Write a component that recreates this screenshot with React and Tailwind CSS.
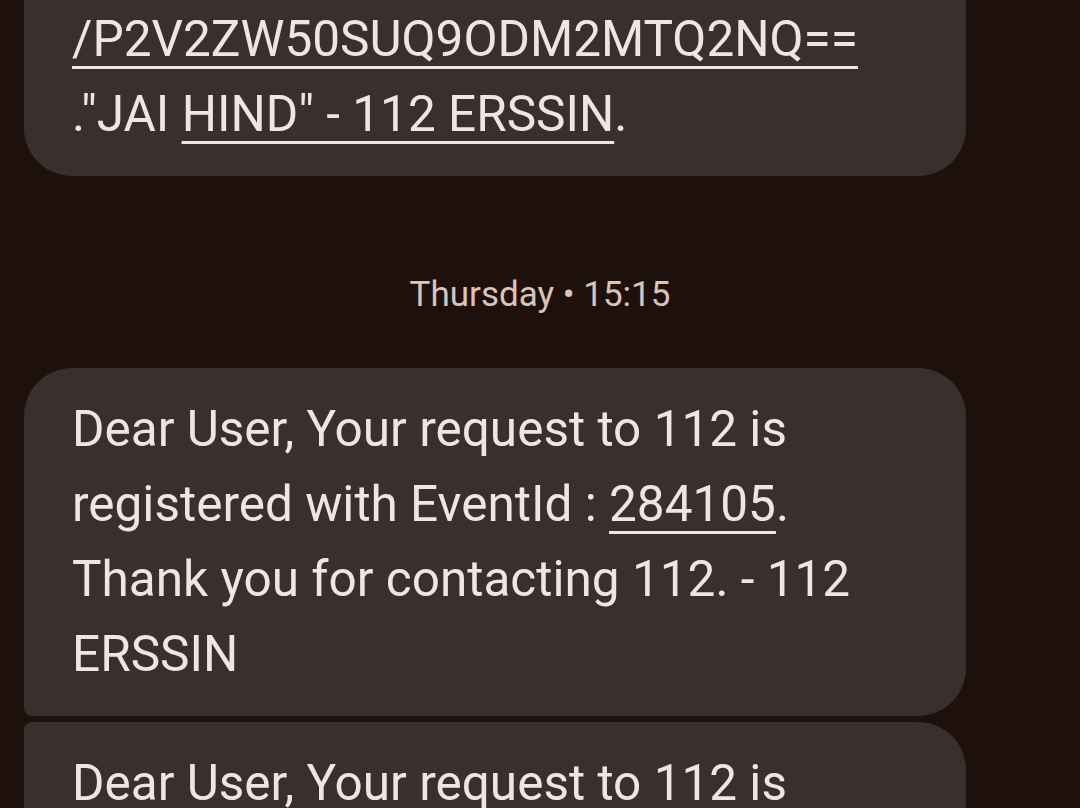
const link = 'underline decoration-[3px] underline-offset-[10px]';

const Bubble = ({ className = '', children }) => (
  <div
    className={`w-[942px] bg-[#38302e] pl-12 pr-[80px] text-[49.5px] leading-[75px] text-[#f2e4e0] ${className}`}
  >
    {children}
  </div>
);

export default function App() {
  return (
    <div
      className="h-[808px] overflow-hidden bg-[#1e110b] px-6"
      style={{ fontFamily: 'Roboto, "Noto Sans", sans-serif' }}
    >
      {/* previous message, cut off by the top of the screen */}
      <Bubble className="pt-[2px] pb-6 rounded-b-[48px]">
        <p>
          <span className={link}>/P2V2ZW50SUQ9ODM2MTQ2NQ==</span>
          <br />
          ."JAI <span className={link}>HIND" - 112 ERSSIN</span>.
        </p>
      </Bubble>

      {/* date divider */}
      <div className="mt-[99px] mb-[53px] text-center text-[35px] leading-[40px] text-[#d8c4bd]">
        Thursday • 15:15
      </div>

      {/* message group */}
      <div className="flex flex-col gap-[6px]">
        <Bubble className="py-6 rounded-t-[48px] rounded-br-[48px] rounded-bl-[8px]">
          <p>
            Dear User, Your request to 112 is registered with EventId :{' '}
            <span className={link}>284105</span>. Thank you for contacting 112. - 112 ERSSIN
          </p>
        </Bubble>
        <Bubble className="py-6 rounded-tl-[8px] rounded-tr-[48px] rounded-b-[48px]">
          <p>
            Dear User, Your request to 112 is registered with EventId :{' '}
            <span className={link}>284105</span>. Thank you for contacting 112. - 112 ERSSIN
          </p>
        </Bubble>
      </div>
    </div>
  );
}
